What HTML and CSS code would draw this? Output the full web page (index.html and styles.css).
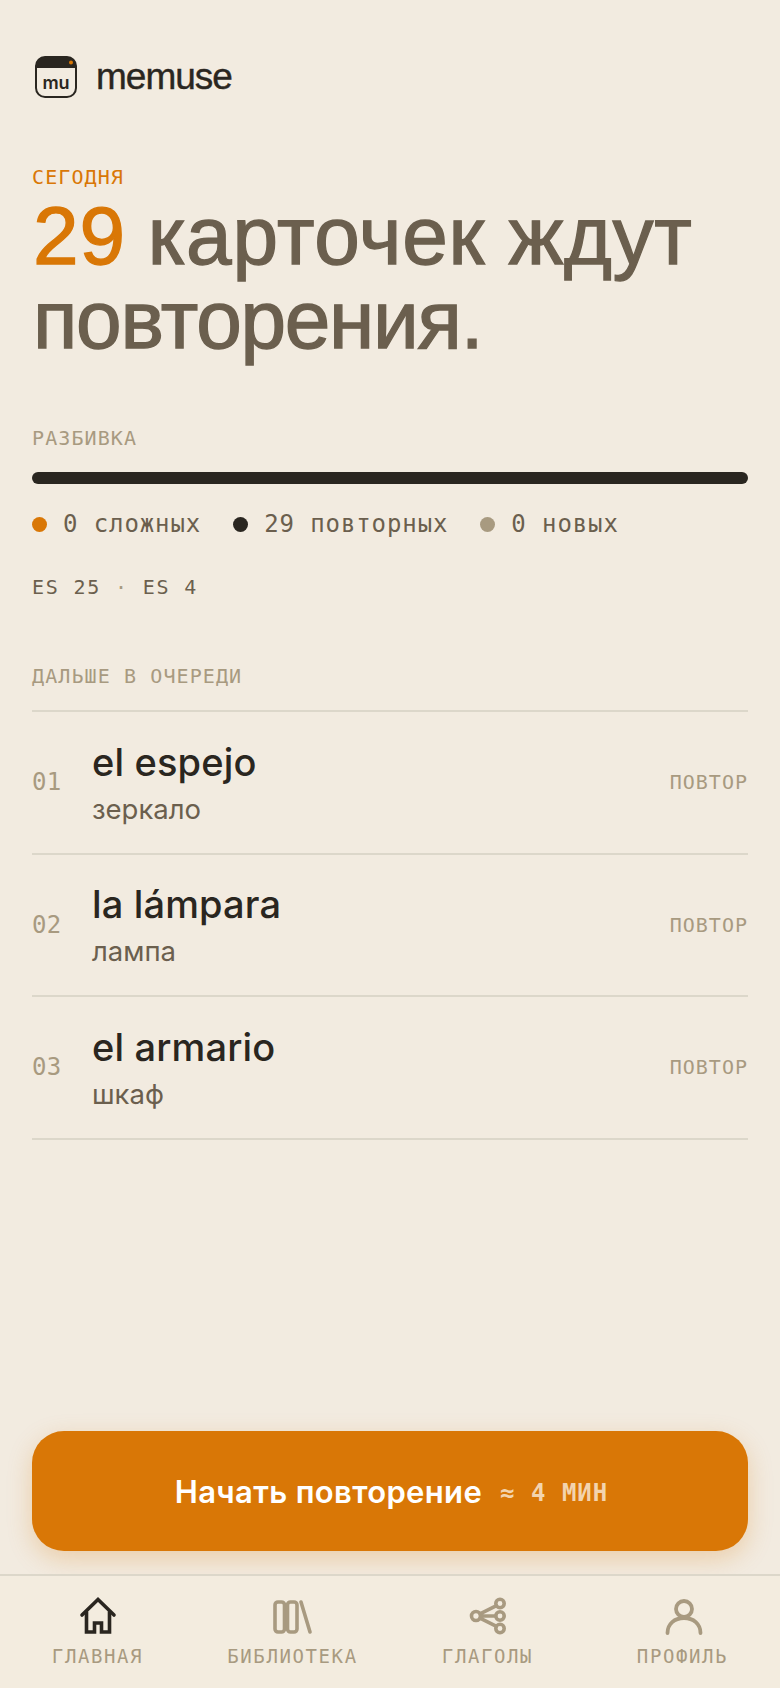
FILE: index.html
```html
<!DOCTYPE html>
<html lang="ru">
<head>
<meta charset="utf-8">
<title>memuse</title>
<link rel="stylesheet" href="styles.css">
</head>
<body>
<div class="app">
  <main class="main">
    <header class="brand">
      <svg class="brand-icon" width="44" height="44" viewBox="0 0 44 44">
        <rect x="2" y="2" width="40" height="40" rx="9" fill="none" stroke="#2a2620" stroke-width="2"/>
        <path d="M2 13V11a9 9 0 0 1 9-9h22a9 9 0 0 1 9 9v2z" fill="#2a2620"/>
        <circle cx="37" cy="7.500" r="2" fill="#d97706"/>
        <text class="brand-mu" x="22" y="34" text-anchor="middle">mu</text>
      </svg>
      <span class="brand-name">memuse</span>
    </header>

    <div class="eyebrow">СЕГОДНЯ</div>
    <h1 class="headline"><span class="headline-num">29</span> <span class="headline-wide">карточек ждут</span> повторения.</h1>

    <div class="label label-break">РАЗБИВКА</div>
    <div class="bar"></div>
    <div class="legend">
      <span class="legend-item"><i class="dot dot-hard"></i>0 сложных</span>
      <span class="legend-item"><i class="dot dot-review"></i>29 повторных</span>
      <span class="legend-item"><i class="dot dot-new"></i>0 новых</span>
    </div>
    <div class="langs">ES 25 <span class="langs-sep">·</span> ES 4</div>

    <div class="label label-queue">ДАЛЬШЕ В ОЧЕРЕДИ</div>
    <ul class="queue">
      <li class="row">
        <span class="row-num">01</span>
        <div class="row-body"><div class="row-word">el espejo</div><div class="row-trans">зеркало</div></div>
        <span class="row-tag">ПОВТОР</span>
      </li>
      <li class="row">
        <span class="row-num">02</span>
        <div class="row-body"><div class="row-word">la lámpara</div><div class="row-trans">лампа</div></div>
        <span class="row-tag">ПОВТОР</span>
      </li>
      <li class="row">
        <span class="row-num">03</span>
        <div class="row-body"><div class="row-word">el armario</div><div class="row-trans">шкаф</div></div>
        <span class="row-tag">ПОВТОР</span>
      </li>
    </ul>
  </main>

  <div class="cta-wrap">
    <button class="cta"><span class="cta-main">Начать повторение</span><span class="cta-sub">≈ 4 МИН</span></button>
  </div>

  <nav class="tabs">
    <a class="tab tab-active">
      <svg width="40" height="40" viewBox="0 0 40 40" fill="none" stroke="currentColor" stroke-width="3.6" stroke-linecap="round" stroke-linejoin="miter"><path d="M4 19 20 3.500 36 19"/><path d="M8.500 16v20h8v-9h7v9h8V16"/></svg>
      <span>ГЛАВНАЯ</span>
    </a>
    <a class="tab">
      <svg width="40" height="40" viewBox="0 0 40 40" fill="none" stroke="currentColor" stroke-width="3.6" stroke-linecap="round" stroke-linejoin="round"><rect x="2" y="6" width="9.500" height="30" rx="3"/><rect x="14.500" y="6" width="9.500" height="30" rx="3"/><path d="M28 6l9 30"/></svg>
      <span>БИБЛИОТЕКА</span>
    </a>
    <a class="tab">
      <svg width="40" height="40" viewBox="0 0 40 40" fill="none" stroke="currentColor" stroke-width="3.6" stroke-linecap="round"><circle cx="8" cy="20" r="4.500"/><circle cx="32" cy="7.500" r="4.200"/><circle cx="32" cy="20" r="4.200"/><circle cx="32" cy="32.500" r="4.200"/><path d="M12 17.800l16-8M12.500 20h15M12 22.200l16 8"/></svg>
      <span>ГЛАГОЛЫ</span>
    </a>
    <a class="tab">
      <svg width="40" height="40" viewBox="0 0 40 40" fill="none" stroke="currentColor" stroke-width="3.800" stroke-linecap="round"><circle cx="21" cy="13" r="8"/><path d="M4.500 37c0-9 7-15 16.500-15s16.500 6 16.500 15"/></svg>
      <span>ПРОФИЛЬ</span>
    </a>
  </nav>
</div>
</body>
</html>
```
FILE: styles.css
```css
* { box-sizing: border-box; }
html, body { margin: 0; padding: 0; }
body {
  background: #f2ebe0;
  color: #2a2620;
  font-family: "Inter", "Liberation Sans", sans-serif;
}
.app {
  width: 780px;
  height: 1688px;
  display: flex;
  flex-direction: column;
}
.main {
  flex: 1;
  padding: 54px 32px 0;
}
.brand {
  display: flex;
  align-items: center;
  gap: 18px;
  margin-left: 2px;
  height: 46px;
}
.brand-mu {
  font: 600 18px "Inter", sans-serif;
  fill: #2a2620;
}
.brand-name {
  font-family: "Liberation Sans", sans-serif;
  font-size: 37px;
  letter-spacing: -1px;
  -webkit-text-stroke: 0.400px #2a2620;
}
.eyebrow, .label, .legend, .langs, .row-num, .row-tag, .cta-sub, .tab span {
  font-family: "DejaVu Sans Mono", monospace;
}
.eyebrow {
  margin-top: 64px;
  font-size: 20px;
  line-height: 26px;
  letter-spacing: 1.100px;
  color: #d97706;
}
.headline {
  margin: 4px 0 0;
  padding-left: 1px;
  font-family: "Liberation Sans", sans-serif;
  font-size: 82px;
  line-height: 84px;
  font-weight: 400;
  letter-spacing: -1.300px;
  color: #6b5f4e;
  -webkit-text-stroke: 1.300px #6b5f4e;
}
.headline-num {
  color: #d97706;
  letter-spacing: 1px;
  -webkit-text-stroke: 1.300px #d97706;
}
.headline-wide { letter-spacing: 0.700px; }
.label {
  font-size: 20px;
  line-height: 26px;
  letter-spacing: 1.100px;
  color: #a89a80;
}
.label-break { margin-top: 63px; }
.bar {
  margin-top: 21px;
  height: 12px;
  border-radius: 6px;
  background: #2a2620;
}
.legend {
  display: flex;
  gap: 32px;
  margin-top: 25px;
  font-size: 24px;
  line-height: 30px;
  letter-spacing: 0.900px;
  color: #6b5f4e;
}
.legend-item { display: flex; align-items: center; }
.dot {
  width: 15px;
  height: 15px;
  border-radius: 50%;
  margin-right: 16px;
}
.dot-hard { background: #d97706; }
.dot-review { background: #2a2620; }
.dot-new { background: #a89a80; }
.langs {
  margin-top: 34px;
  font-size: 20px;
  line-height: 28px;
  letter-spacing: 1.800px;
  color: #6b5f4e;
}
.langs-sep { color: #a89a80; }
.label-queue { margin-top: 62px; }
.queue {
  list-style: none;
  margin: 21px 0 0;
  padding: 0;
  border-top: 2px solid #dcd7ca;
}
.row {
  display: flex;
  align-items: center;
  height: 142.500px;
  border-bottom: 2px solid #dcd7ca;
}
.row-num {
  width: 60px;
  font-size: 24px;
  letter-spacing: 0.300px;
  color: #a89a80;
}
.row-body { flex: 1; }
.row-word {
  font-size: 38px;
  line-height: 48px;
  font-weight: 500;
  letter-spacing: 0.150px;
}
.row-trans {
  margin-top: 5px;
  font-size: 27.500px;
  line-height: 36px;
  color: #6b5f4e;
}
.row-tag {
  font-size: 20px;
  letter-spacing: 1px;
  color: #a89a80;
}
.cta-wrap { padding: 0 32px 23px; }
.cta {
  display: flex;
  align-items: center;
  justify-content: center;
  gap: 18px;
  width: 100%;
  height: 120px;
  padding: 0 0 0 3px;
  border: 0;
  border-radius: 32px;
  background: #d97706;
  box-shadow: 0 8px 24px rgba(217, 119, 6, 0.25);
  color: #fff;
}
.cta-main {
  font-family: "Inter", sans-serif;
  font-size: 31px;
  font-weight: 600;
  letter-spacing: 0.350px;
}
.cta-sub {
  padding-top: 4px;
  font-size: 24px;
  font-weight: 700;
  letter-spacing: 1px;
  color: #f3d4ae;
}
.tabs {
  display: grid;
  grid-template-columns: repeat(4, 1fr);
  height: 114px;
  padding-top: 20px;
  border-top: 2px solid #dcd7ca;
  background: #f3ecdf;
}
.tab {
  display: flex;
  flex-direction: column;
  align-items: center;
  color: #a89a80;
}
.tab-active { color: #2a2620; }
.tab span {
  margin-top: 7px;
  font-size: 19px;
  line-height: 26px;
  letter-spacing: 1.600px;
  color: #a89a80;
}
```
